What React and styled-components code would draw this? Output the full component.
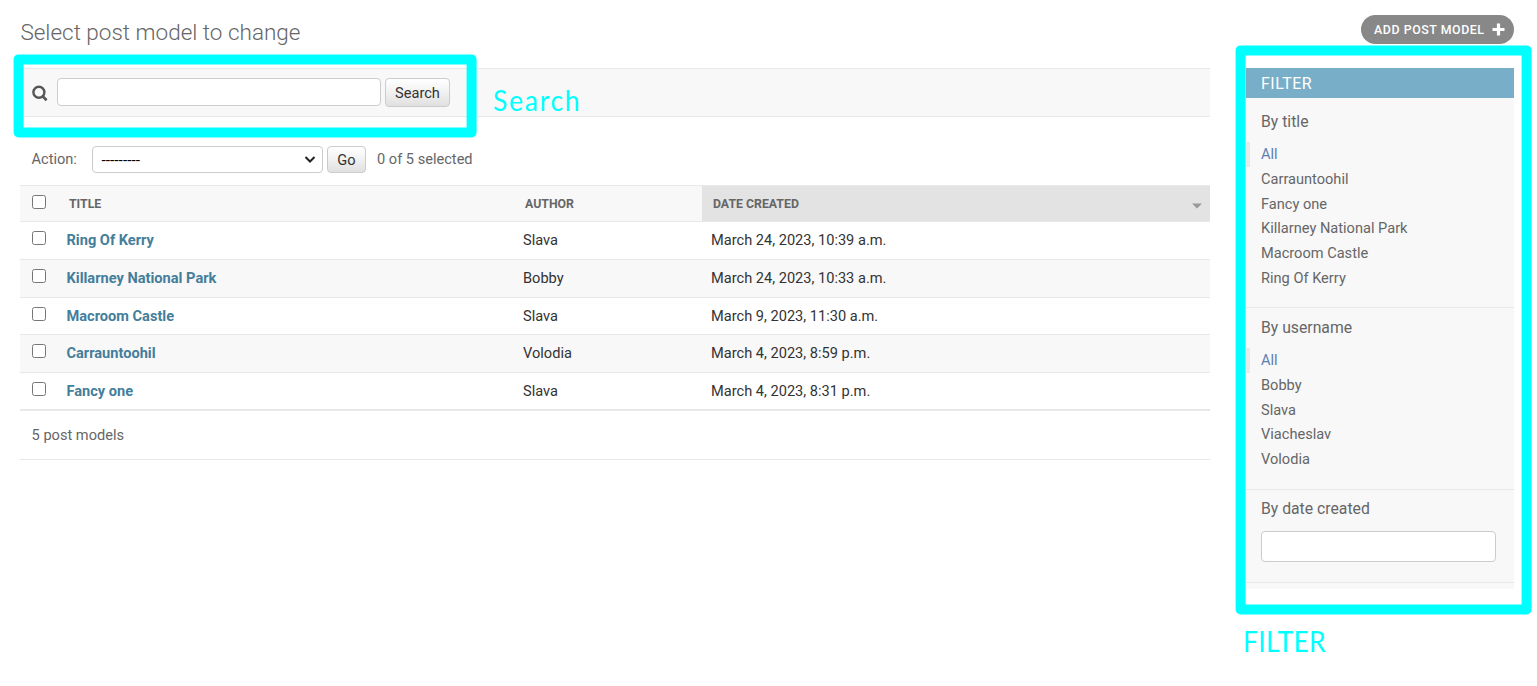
import React from "react";
import styled, { createGlobalStyle } from "styled-components";

const GlobalStyle = createGlobalStyle`
  * { box-sizing: border-box; }
  body { margin: 0; background: #fff; color: #333; font-family: Roboto, "Liberation Sans", sans-serif; font-size: 14.6px; }
  h1, h2, h3, ul, p { margin: 0; padding: 0; font-weight: 400; }
  ul { list-style: none; }
`;

const Page = styled.div`
  position: relative;
  width: 1537px;
  height: 686px;
  padding: 15px 23px 0 20px;
  overflow: hidden;
`;

const Header = styled.header`
  display: flex;
  justify-content: space-between;
  align-items: flex-start;
  height: 53px;
`;

const PageTitle = styled.h1`
  padding-left: 0.4px;
  font-size: 22.5px;
  line-height: 34px;
  font-weight: 300;
  color: #666;
`;

const AddButton = styled.a`
  display: flex;
  align-items: center;
  justify-content: space-between;
  width: 153px;
  height: 29px;
  padding: 0 9px 0 13px;
  border-radius: 15px;
  background: #888;
  color: #fff;
  font-size: 12.4px;
  font-weight: 500;
  letter-spacing: 0.55px;
  white-space: nowrap;
`;

const Columns = styled.div`
  display: flex;
  justify-content: space-between;
  align-items: flex-start;
`;

const Results = styled.main`
  width: 1190px;
`;

const SearchBar = styled.form`
  display: flex;
  align-items: flex-start;
  height: 49px;
  padding: 9px 11px;
  background: #f8f8f8;
  border-top: 1px solid #e8e8e8;
  border-bottom: 1px solid #e8e8e8;
`;

const SearchIcon = styled.svg`
  width: 17px;
  height: 17px;
  margin: 7px 9px 0 0;
`;

const TextField = styled.input`
  display: block;
  width: ${(p) => p.$width}px;
  height: ${(p) => p.$height}px;
  padding: 2px 6px;
  border: 1px solid #ccc;
  border-radius: 4px;
  background: #fff;
  font: inherit;
  outline: none;
`;

const Button = styled.button`
  width: ${(p) => p.$width}px;
  height: ${(p) => p.$height}px;
  margin-left: 4px;
  padding: 1px 0 0;
  border: 1px solid #ccc;
  border-radius: 4px;
  background: linear-gradient(#fff, #f4f4f4 40%, #e0e0e0);
  color: #333;
  font: inherit;
  line-height: 1;
`;

const Actions = styled.div`
  display: flex;
  height: 68px;
  padding: 29px 12px 0 11.5px;
  color: #666;
`;

const ActionLabel = styled.label`
  width: 60.5px;
  line-height: 27px;
`;

const Select = styled.div`
  display: flex;
  align-items: center;
  justify-content: space-between;
  width: 231px;
  height: 27px;
  padding: 1px 6px 0 8.5px;
  border: 1px solid #ccc;
  border-radius: 4px;
  color: #000;
  font-size: 15.2px;
  letter-spacing: 0.08px;
`;

const Counter = styled.span`
  margin-left: 11px;
  line-height: 27px;
`;

const Grid = styled.div`
  display: grid;
  grid-template-columns: 49px 454px 179px 508px;
`;

const HeadRow = styled(Grid)`
  height: 37px;
  border-top: 1px solid #e8e8e8;
  border-bottom: 1px solid #e8e8e8;
  background: #f8f8f8;
  color: #666;
  font-size: 12.3px;
  font-weight: 700;
`;

const HeadCell = styled.div`
  display: flex;
  align-items: center;
  justify-content: space-between;
  padding: 1px 8px 0 ${(p) => p.$indent || 0}px;
  background: ${(p) => (p.$sorted ? "#e3e3e3" : "transparent")};
`;

const SortArrow = styled.svg`
  width: 10px;
  height: 6px;
  margin-top: 4px;
`;

const Row = styled(Grid)`
  height: ${(p) => p.$height}px;
  border-bottom: 1px solid #e8e8e8;
  background: ${(p) => (p.$odd ? "#f8f8f8" : "#fff")};
  line-height: 37px;
`;

const CheckCell = styled.div`
  padding: ${(p) => p.$top}px 0 0 12px;
`;

const Checkbox = styled.input`
  display: block;
  width: 14px;
  height: 14px;
  margin: 0;
`;

const TitleCell = styled.div`
  margin-left: -2.5px;
`;

const TitleLink = styled.a`
  color: #447e9b;
  font-weight: 700;
`;

const Cell = styled.div`
  padding-left: ${(p) => p.$indent || 0}px;
`;

const Paginator = styled.p`
  height: 50px;
  padding-left: 11.6px;
  border-top: 1px solid #e8e8e8;
  border-bottom: 1px solid #e8e8e8;
  color: #666;
  line-height: 48px;
`;

const Sidebar = styled.aside`
  width: 268px;
  height: 521px;
  background: #f8f8f8;
  color: #666;
`;

const SidebarTitle = styled.h2`
  height: 30px;
  padding-left: 15px;
  background: #79aec8;
  color: #fff;
  font-size: 16px;
  line-height: 31px;
  letter-spacing: 0.5px;
`;

const FilterGroup = styled.section`
  height: ${(p) => p.$height}px;
  padding: ${(p) => p.$top}px 0 0 15px;
  border-bottom: 1px solid #e8e8e8;
`;

const FilterHeading = styled.h3`
  height: ${(p) => p.$height || 30}px;
  font-size: 15.75px;
  line-height: 19px;
`;

const FilterOption = styled.li`
  height: 24.8px;
  margin-left: -15px;
  padding-left: ${(p) => (p.$selected ? 11 : 15)}px;
  border-left: ${(p) => (p.$selected ? "4px solid #e8e8e8" : "none")};
  color: ${(p) => (p.$selected ? "#5b80b2" : "#666")};
  line-height: 24.8px;
`;

const Frame = styled.div`
  position: absolute;
  left: ${(p) => p.$x}px;
  top: ${(p) => p.$y}px;
  width: ${(p) => p.$w}px;
  height: ${(p) => p.$h}px;
  border: 10px solid #00ffff;
  border-radius: 5px;
  transform: translate(-0.4px, 0.4px);
  pointer-events: none;
`;

const Callout = styled.span`
  position: absolute;
  left: ${(p) => p.$x}px;
  top: ${(p) => p.$y}px;
  color: #00ffff;
  font-family: Lato, "Open Sans", sans-serif;
  font-size: 28.6px;
  font-weight: 400;
  line-height: 36px;
  letter-spacing: ${(p) => p.$spacing}px;
  transform: scaleX(0.93);
  transform-origin: left;
`;

const posts = [
  ["Ring Of Kerry", "Slava", "March 24, 2023, 10:39 a.m."],
  ["Killarney National Park", "Bobby", "March 24, 2023, 10:33 a.m."],
  ["Macroom Castle", "Slava", "March 9, 2023, 11:30 a.m."],
  ["Carrauntoohil", "Volodia", "March 4, 2023, 8:59 p.m."],
  ["Fancy one", "Slava", "March 4, 2023, 8:31 p.m."],
];

const rowHeights = [38, 38, 37, 38, 37];

const titles = ["All", "Carrauntoohil", "Fancy one", "Killarney National Park", "Macroom Castle", "Ring Of Kerry"];
const usernames = ["All", "Bobby", "Slava", "Viacheslav", "Volodia"];

function Options({ items }) {
  return (
    <ul>
      {items.map((item, i) => (
        <FilterOption key={item} $selected={i === 0}>{item}</FilterOption>
      ))}
    </ul>
  );
}

export default function App() {
  return (
    <Page>
      <GlobalStyle />
      <Header>
        <PageTitle>Select post model to change</PageTitle>
        <AddButton>
          ADD POST MODEL
          <svg width="13" height="13" viewBox="0 0 13 13">
            <path d="M6.5 0.5V12.5M0.5 6.5H12.5" stroke="#fff" strokeWidth="3.2" />
          </svg>
        </AddButton>
      </Header>
      <Columns>
        <Results>
          <SearchBar onSubmit={(e) => e.preventDefault()}>
            <SearchIcon viewBox="0 0 17 17" fill="none" stroke="#555">
              <circle cx="7.9" cy="7.2" r="5.5" strokeWidth="2.4" />
              <path d="M11.6 11.1L15.6 15.2" strokeWidth="2.7" />
            </SearchIcon>
            <TextField $width={324} $height={28} aria-label="Search posts" />
            <Button $width={65} $height={29}>Search</Button>
          </SearchBar>
          <Actions>
            <ActionLabel>Action:</ActionLabel>
            <Select>
              <span>---------</span>
              <svg width="12" height="8" viewBox="0 0 12 8" fill="none">
                <path d="M1.5 1L6 5.5L10.5 1" stroke="#222" strokeWidth="2" />
              </svg>
            </Select>
            <Button type="button" $width={39} $height={27}>Go</Button>
            <Counter>0 of 5 selected</Counter>
          </Actions>
          <HeadRow>
            <CheckCell $top={9}><Checkbox type="checkbox" aria-label="Select all" /></CheckCell>
            <HeadCell>TITLE</HeadCell>
            <HeadCell $indent={2}>AUTHOR</HeadCell>
            <HeadCell $indent={11} $sorted>
              DATE CREATED
              <SortArrow viewBox="0 0 10 6">
                <path d="M0 0.5H10L5 5.5Z" fill="#999" />
              </SortArrow>
            </HeadCell>
          </HeadRow>
          {posts.map(([title, author, date], i) => (
            <Row key={title} $odd={i % 2 === 1} $height={rowHeights[i]}>
              <CheckCell $top={9}><Checkbox type="checkbox" aria-label={title} /></CheckCell>
              <TitleCell><TitleLink>{title}</TitleLink></TitleCell>
              <Cell>{author}</Cell>
              <Cell $indent={9}>{date}</Cell>
            </Row>
          ))}
          <Paginator>5 post models</Paginator>
        </Results>
        <Sidebar>
          <SidebarTitle>FILTER</SidebarTitle>
          <FilterGroup $height={210} $top={14}>
            <FilterHeading>By title</FilterHeading>
            <Options items={titles} />
          </FilterGroup>
          <FilterGroup $height={182} $top={10}>
            <FilterHeading>By username</FilterHeading>
            <Options items={usernames} />
          </FilterGroup>
          <FilterGroup $height={93} $top={9}>
            <FilterHeading $height={32}>By date created</FilterHeading>
            <TextField $width={235} $height={31} aria-label="Date created" />
          </FilterGroup>
        </Sidebar>
      </Columns>
      <Frame $x={14} $y={54} $w={463} $h={83} />
      <Frame $x={1236} $y={45} $w={296} $h={569} />
      <Callout $x={493} $y={82} $spacing={1.8}>Search</Callout>
      <Callout $x={1243} $y={623} $spacing={0.3}>FILTER</Callout>
    </Page>
  );
}
